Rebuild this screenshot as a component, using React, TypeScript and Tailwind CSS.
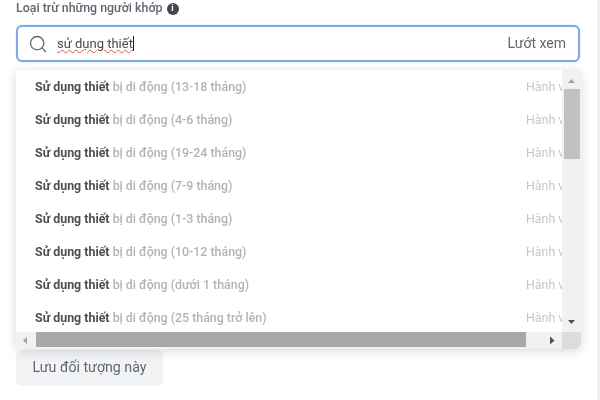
import { Search } from 'lucide-react';

const items = [
    'bị di động (13-18 tháng)',
    'bị di động (4-6 tháng)',
    'bị di động (19-24 tháng)',
    'bị di động (7-9 tháng)',
    'bị di động (1-3 tháng)',
    'bị di động (10-12 tháng)',
    'bị di động (dưới 1 tháng)',
    'bị di động (25 tháng trở lên)',
];

export default function App() {
    return (
        <div className="relative h-[400px] w-[600px] overflow-hidden bg-white font-['Roboto',sans-serif] blur-[0.5px]">
            <div className="h-full w-[597px] bg-white px-4 pt-[1px]">
                <div className="flex h-[15px] items-center gap-[4px] text-[12.4px] font-medium text-[#606770]">
                    Loại trừ những người khớp
                    <span className="flex h-[12px] w-[12px] items-center justify-center rounded-full bg-[#444950] text-[9px] font-bold text-white">
                        i
                    </span>
                </div>
                <div className="mt-[9px] flex h-[37px] w-[564px] items-center rounded-md border-2 border-[#7fa9e4] bg-white pl-[10px] pr-[12px] shadow-[0_0_2px_#c5d8f3]">
                    <Search size={20} strokeWidth={1.6} className="text-[#606770]" />
                    <span className="ml-[9px] text-[13px] text-[#444950] underline decoration-wavy decoration-[#d9534f] decoration-1">
                        sử dụng thiết
                    </span>
                    <span className="h-[15px] w-px bg-[#1c1e21]" />
                    <span className="ml-auto text-[14px] text-[#606770]">Lướt xem</span>
                </div>
                <button className="mt-[288px] h-[36px] w-[147px] rounded-md bg-[#f2f3f5] text-[14.2px] text-[#606770]">
                    Lưu đối tượng này
                </button>
            </div>
            <div className="absolute bottom-[51px] left-4 top-[70px] flex w-[565px] flex-col overflow-hidden rounded-b-md bg-white shadow-[0_2px_12px_rgba(0,0,0,0.15)]">
                <div className="flex min-h-0 flex-1">
                    <div className="min-w-0 flex-1 overflow-hidden pt-[1px]">
                        {items.map((item) => (
                            <div key={item} className="flex h-[33px] items-center justify-between pl-[19px] text-[12.4px] font-medium">
                                <span className="whitespace-nowrap">
                                    <span className="font-bold text-[#4b4f56]">Sử dụng thiết</span>{' '}
                                    <span className="text-[#b0b3b8]">{item}</span>
                                </span>
                                <span className="w-[36px] overflow-hidden whitespace-nowrap font-normal text-[#c4c7cc]">Hành vi</span>
                            </div>
                        ))}
                    </div>
                    <div className="flex w-[19px] flex-col items-center bg-[#f1f1f1]">
                        <svg width="9" height="19" viewBox="0 0 9 19" className="shrink-0"><path d="M1 13 L4.5 9 L8 13 Z" fill="#a3a3a3" /></svg>
                        <div className="h-[70px] w-[16px] bg-[#c1c1c1]" />
                        <div className="flex-1" />
                        <svg width="9" height="17" viewBox="0 0 9 17" className="shrink-0"><path d="M1 5 L8 5 L4.5 9 Z" fill="#505050" /></svg>
                    </div>
                </div>
                <div className="flex h-[17px] shrink-0 items-start bg-[#f1f1f1]">
                    <svg width="20" height="17" viewBox="0 0 20 17" className="shrink-0"><path d="M11 5 L11 12 L7 8.5 Z" fill="#a3a3a3" /></svg>
                    <div className="h-[15px] w-[490px] bg-[#a8a8a8]" />
                    <div className="flex h-[17px] flex-1 items-center justify-end pr-[7px]">
                        <svg width="6" height="9" viewBox="0 0 6 9"><path d="M1 0.5 L1 8.5 L5.5 4.5 Z" fill="#505050" /></svg>
                    </div>
                    <div className="h-[17px] w-[19px] bg-[#dcdcdc]" />
                </div>
            </div>
            <div className="absolute bottom-0 right-0 top-0 w-[3px] bg-[#f0f0f0]" />
        </div>
    );
}
